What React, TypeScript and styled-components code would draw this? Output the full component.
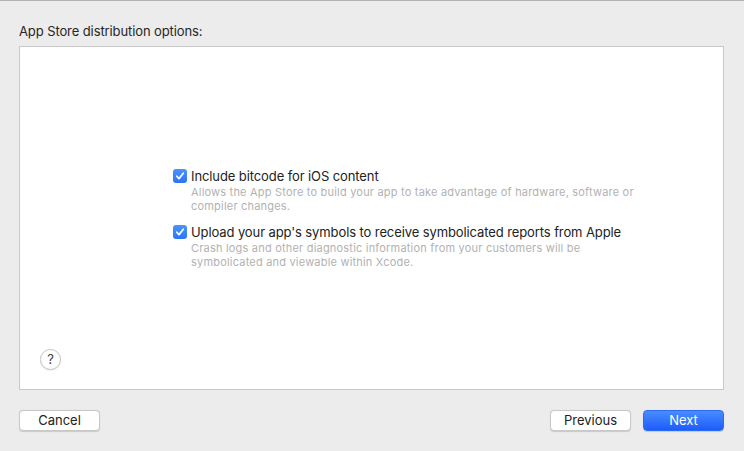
import React from "react";
import styled, { createGlobalStyle } from "styled-components";

const GlobalStyle = createGlobalStyle`
  html, body {
    margin: 0;
    padding: 0;
    background: #ececec;
  }
  body {
    font-family: "Inter", "Roboto", "Liberation Sans", sans-serif;
    -webkit-font-smoothing: antialiased;
  }
`;

const Sheet = styled.div`
  width: 744px;
  height: 451px;
  box-sizing: border-box;
  border-top: 1px solid #b2b2b2;
  background: #ececec;
  display: flex;
  flex-direction: column;
  padding: 0 20px 0 19px;
`;

const Heading = styled.div`
  margin-top: 22px;
  height: 17px;
  font-size: 13px;
  line-height: 17px;
  color: #262626;
  letter-spacing: -0.1px;
`;

const Panel = styled.div`
  margin-top: 6px;
  height: 344px;
  box-sizing: border-box;
  background: #ffffff;
  border: 1px solid #c9c9c9;
  position: relative;
  display: flex;
  flex-direction: column;
  justify-content: center;
`;

const OptionList = styled.div`
  margin-left: 153px;
  width: 470px;
  display: flex;
  flex-direction: column;
  gap: 10px;
  margin-top: 1px;
`;

const Option = styled.label`
  display: grid;
  grid-template-columns: 14px 1fr;
  column-gap: 4px;
  align-items: start;
`;

const Box = styled.span`
  width: 14px;
  height: 14px;
  margin-top: 1px;
  border-radius: 3px;
  background: linear-gradient(#4a94ff, #2c74f5);
  display: flex;
  align-items: center;
  justify-content: center;
`;

const OptionTitle = styled.span`
  font-size: 13px;
  line-height: 17px;
  color: #222222;
  letter-spacing: -0.1px;
`;

const OptionNote = styled.span`
  grid-column: 2;
  font-size: 11px;
  line-height: 14.5px;
  letter-spacing: 0.2px;
  color: #b2b2b2;
`;

const HelpButton = styled.button`
  position: absolute;
  left: 20px;
  bottom: 19px;
  width: 21px;
  height: 21px;
  padding: 0;
  border-radius: 50%;
  border: 1px solid #c6c6c6;
  background: #ffffff;
  box-shadow: 0 0.5px 1px rgba(0, 0, 0, 0.12);
  font-family: inherit;
  font-size: 13px;
  line-height: 19px;
  color: #3a3a3a;
`;

const Footer = styled.div`
  margin-top: 20px;
  display: flex;
  align-items: center;
  gap: 12px;
`;

const Spacer = styled.div`
  flex: 1;
`;

const Button = styled.button<{ $primary?: boolean }>`
  width: 81px;
  height: 21px;
  box-sizing: border-box;
  padding: 0;
  border-radius: 4px;
  font-family: inherit;
  font-size: 13px;
  line-height: 19px;
  border: 1px solid ${(p) => (p.$primary ? "#2a6cf6" : "#c8c8c8")};
  color: ${(p) => (p.$primary ? "#ffffff" : "#222222")};
  background: ${(p) =>
    p.$primary ? "linear-gradient(#4a8cff, #1e5cfb)" : "#ffffff"};
  box-shadow: 0 0.5px 1px rgba(0, 0, 0, 0.15);
`;

const Check = () => (
  <svg width="10" height="10" viewBox="0 0 10 10">
    <path
      d="M1.8 5.2 L4 7.6 L8.3 2.2"
      fill="none"
      stroke="#ffffff"
      strokeWidth="1.7"
      strokeLinecap="round"
      strokeLinejoin="round"
    />
  </svg>
);

export default function App() {
  return (
    <>
      <GlobalStyle />
      <Sheet>
        <Heading>App Store distribution options:</Heading>
        <Panel>
          <OptionList>
            <Option>
              <Box>
                <Check />
              </Box>
              <OptionTitle>Include bitcode for iOS content</OptionTitle>
              <OptionNote>
                Allows the App Store to build your app to take advantage of
                hardware, software or compiler changes.
              </OptionNote>
            </Option>
            <Option>
              <Box>
                <Check />
              </Box>
              <OptionTitle>
                Upload your app's symbols to receive symbolicated reports from
                Apple
              </OptionTitle>
              <OptionNote>
                Crash logs and other diagnostic information from your customers
                will be symbolicated and viewable within Xcode.
              </OptionNote>
            </Option>
          </OptionList>
          <HelpButton>?</HelpButton>
        </Panel>
        <Footer>
          <Button>Cancel</Button>
          <Spacer />
          <Button>Previous</Button>
          <Button $primary>Next</Button>
        </Footer>
      </Sheet>
    </>
  );
}
